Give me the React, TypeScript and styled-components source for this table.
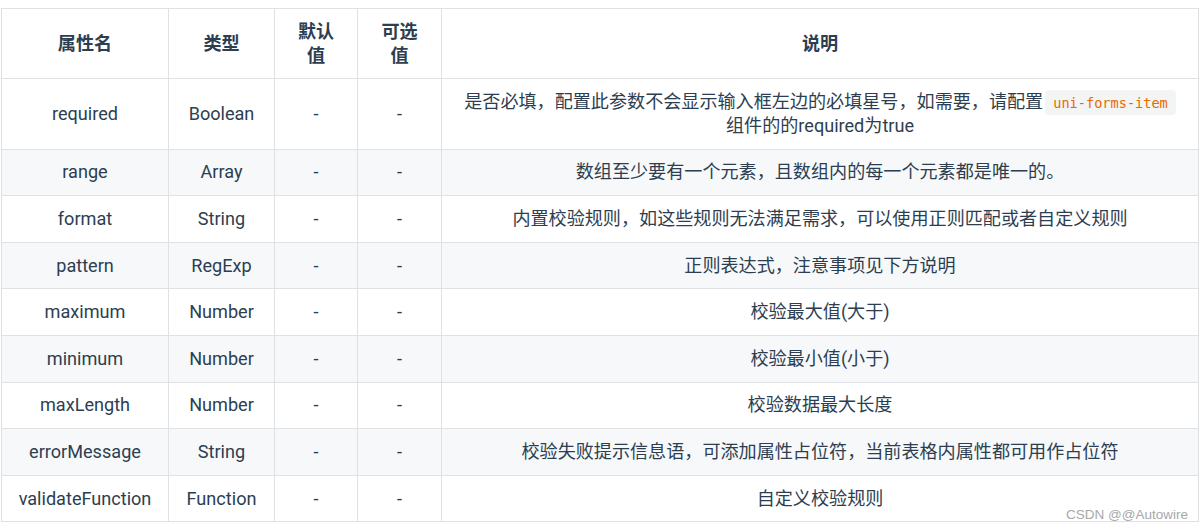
import React from "react";
import styled, { createGlobalStyle } from "styled-components";

const Global = createGlobalStyle`
  html, body { margin: 0; padding: 0; background: #ffffff; }
  body {
    font-family: Roboto, "Noto Sans CJK SC", sans-serif;
    color: #2c3e50;
  }
`;

const Page = styled.div`
  position: relative;
  width: 1203px;
  height: 530px;
  padding: 8px 0 0 1px;
  box-sizing: border-box;
  overflow: hidden;
`;

const Table = styled.table`
  border-collapse: collapse;
  table-layout: fixed;
  width: 1197px;
  font-size: 18.1px;
  line-height: 24px;
`;

const Head = styled.th`
  border: 1px solid #dfe2e5;
  padding: 10.5px 16px;
  font-weight: 700;
  text-align: center;
  color: #2c3e50;
  background: #ffffff;
`;

const Row = styled.tr<{ $striped: boolean }>`
  background: ${(p) => (p.$striped ? "#f6f8fa" : "#ffffff")};
`;

const Cell = styled.td<{ $wide?: boolean }>`
  border: 1px solid #dfe2e5;
  padding: 10.8px ${(p) => (p.$wide ? "14px" : "10px")};
  text-align: center;
  color: #2c3e50;
  white-space: nowrap;
`;

const Code = styled.code`
  display: inline;
  font-family: "DejaVu Sans Mono", "Liberation Mono", monospace;
  font-size: 13.6px;
  line-height: 20px;
  color: #e96900;
  background: #f3f4f4;
  border-radius: 4px;
  padding: 4.5px 8px;
  margin-left: 2px;
`;

const Watermark = styled.div`
  position: absolute;
  right: 15px;
  bottom: 8px;
  font-family: "Liberation Sans", Arial, sans-serif;
  font-size: 13.5px;
  line-height: 15px;
  color: #a8a8a8;
`;

type Item = { name: string; type: string; desc: React.ReactNode };

const items: Item[] = [
  {
    name: "required",
    type: "Boolean",
    desc: (
      <>
        是否必填，配置此参数不会显示输入框左边的必填星号，如需要，请配置
        <Code>uni-forms-item</Code>
        <br />
        组件的的required为true
      </>
    ),
  },
  { name: "range", type: "Array", desc: "数组至少要有一个元素，且数组内的每一个元素都是唯一的。" },
  { name: "format", type: "String", desc: "内置校验规则，如这些规则无法满足需求，可以使用正则匹配或者自定义规则" },
  { name: "pattern", type: "RegExp", desc: "正则表达式，注意事项见下方说明" },
  { name: "maximum", type: "Number", desc: "校验最大值(大于)" },
  { name: "minimum", type: "Number", desc: "校验最小值(小于)" },
  { name: "maxLength", type: "Number", desc: "校验数据最大长度" },
  { name: "errorMessage", type: "String", desc: "校验失败提示信息语，可添加属性占位符，当前表格内属性都可用作占位符" },
  { name: "validateFunction", type: "Function", desc: "自定义校验规则" },
];

export default function App() {
  return (
    <Page>
      <Global />
      <Table>
        <colgroup>
          <col style={{ width: 167 }} />
          <col style={{ width: 106 }} />
          <col style={{ width: 83 }} />
          <col style={{ width: 84 }} />
          <col style={{ width: 757 }} />
        </colgroup>
        <thead>
          <tr>
            <Head>属性名</Head>
            <Head>类型</Head>
            <Head>默认值</Head>
            <Head>可选值</Head>
            <Head>说明</Head>
          </tr>
        </thead>
        <tbody>
          {items.map((it, i) => (
            <Row key={it.name} $striped={i % 2 === 1}>
              <Cell>{it.name}</Cell>
              <Cell>{it.type}</Cell>
              <Cell>-</Cell>
              <Cell>-</Cell>
              <Cell $wide>{it.desc}</Cell>
            </Row>
          ))}
        </tbody>
      </Table>
      <Watermark>CSDN @@Autowire</Watermark>
    </Page>
  );
}
